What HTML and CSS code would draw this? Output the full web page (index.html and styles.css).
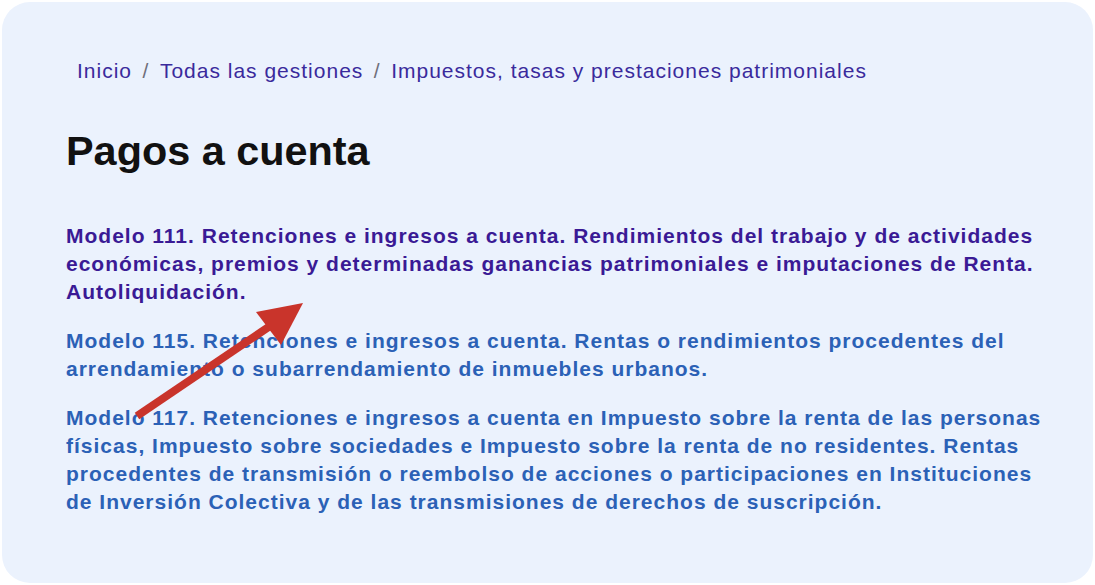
FILE: index.html
```html
<!DOCTYPE html>
<html lang="es">
<head>
<meta charset="utf-8">
<title>Pagos a cuenta</title>
<link rel="stylesheet" href="styles.css">
</head>
<body>
<div class="card">
  <nav class="breadcrumb">
    <a href="#" class="crumb">Inicio</a><span class="sep">/</span><a href="#" class="crumb">Todas las gestiones</a><span class="sep">/</span><a href="#" class="crumb">Impuestos, tasas y prestaciones patrimoniales</a>
  </nav>
  <h1 class="title">Pagos a cuenta</h1>
  <ul class="links">
    <li><a href="#" class="link visited">Modelo 111. Retenciones e ingresos a cuenta. Rendimientos del trabajo y de actividades económicas, premios y determinadas ganancias patrimoniales e imputaciones de Renta. Autoliquidación.</a></li>
    <li><a href="#" class="link">Modelo 115. Retenciones e ingresos a cuenta. Rentas o rendimientos procedentes del arrendamiento o subarrendamiento de inmuebles urbanos.</a></li>
    <li><a href="#" class="link">Modelo 117. Retenciones e ingresos a cuenta en Impuesto sobre la renta de las personas físicas, Impuesto sobre sociedades e Impuesto sobre la renta de no residentes. Rentas procedentes de transmisión o reembolso de acciones o participaciones en Instituciones de Inversión Colectiva y de las transmisiones de derechos de suscripción.</a></li>
  </ul>
  <svg class="arrow" width="1095" height="585" viewBox="0 0 1095 585" aria-hidden="true">
    <line x1="137" y1="416" x2="276" y2="322" stroke="#c9342b" stroke-width="8" stroke-linecap="butt"/>
    <polygon points="303,303 256,312 281,345" fill="#c9342b"/>
  </svg>
</div>
</body>
</html>
```

FILE: styles.css
```css
* { box-sizing: border-box; }
html, body { margin: 0; padding: 0; background: #ffffff; }
body {
  font-family: "Liberation Sans", Arial, sans-serif;
  width: 1095px;
  height: 585px;
  overflow: hidden;
}
.card {
  position: relative;
  margin: 2px;
  height: 581px;
  border-radius: 28px;
  background: #ebf2fd;
  padding: 55px 40px 0 64px;
}
.breadcrumb {
  padding-left: 11px;
  font-size: 21px;
  line-height: 28px;
  letter-spacing: 1px;
  display: flex;
  align-items: baseline;
}
.crumb { color: #3a2a9c; text-decoration: none; }
.sep { color: #6f6f7a; margin: 0 10.5px; }
.title {
  margin: 42px 0 0 0;
  font-size: 41.4px;
  line-height: 48px;
  font-weight: bold;
  color: #111111;
}
.links {
  list-style: none;
  margin: 47px 0 0 0;
  padding: 0;
  display: flex;
  flex-direction: column;
  gap: 21px;
}
.link {
  font-size: 21px;
  line-height: 28px;
  letter-spacing: 1px;
  font-weight: bold;
  text-decoration: none;
  color: #2b61b6;
}
.link.visited { color: #3a1a95; }
.arrow {
  position: absolute;
  left: -2px;
  top: -2px;
  pointer-events: none;
}
```
